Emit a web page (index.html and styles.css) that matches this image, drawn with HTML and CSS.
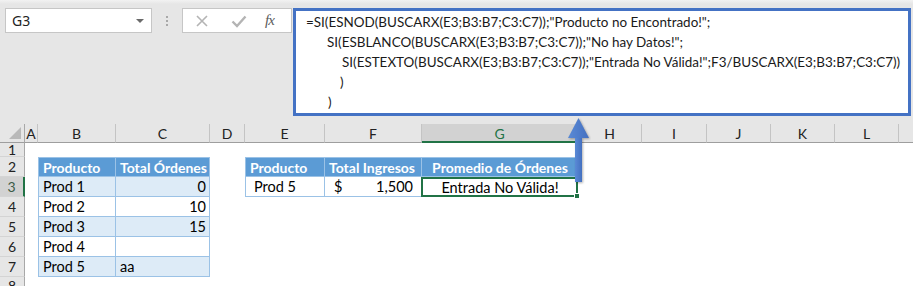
FILE: index.html
```html
<!DOCTYPE html>
<html lang="es">
<head>
<meta charset="utf-8">
<title>Hoja de cálculo</title>
<link rel="stylesheet" href="styles.css">
</head>
<body>
<div class="app">
  <div class="toolbar">
    <div class="namebox">
      <span class="ref">G3</span>
      <span class="caret"></span>
    </div>
    <div class="grip"><i></i><i></i><i></i></div>
    <div class="fxbuttons">
      <svg class="btn" width="14" height="14" viewBox="0 0 14 14"><path d="M2 2 L12 12 M12 2 L2 12" stroke="#b4b4b4" stroke-width="1.6" fill="none"/></svg>
      <svg class="btn" width="16" height="14" viewBox="0 0 16 14"><path d="M1.5 7.5 L6 12 L14.5 2.5" stroke="#b4b4b4" stroke-width="2.4" fill="none"/></svg>
      <span class="fx">fx</span>
    </div>
    <div class="formula">
      <div class="fl l1">=SI(ESNOD(BUSCARX(E3;B3:B7;C3:C7));"Producto no Encontrado!";</div>
      <div class="fl l2">SI(ESBLANCO(BUSCARX(E3;B3:B7;C3:C7));"No hay Datos!";</div>
      <div class="fl l3">SI(ESTEXTO(BUSCARX(E3;B3:B7;C3:C7));"Entrada No Válida!";F3/BUSCARX(E3;B3:B7;C3:C7))</div>
      <div class="fl l4">)</div>
      <div class="fl l5">)</div>
    </div>
  </div>

  <div class="sheet">
    <!-- column headers -->
    <div class="corner"><span class="tri"></span></div>
    <div class="ch">A</div>
    <div class="ch">B</div>
    <div class="ch">C</div>
    <div class="ch">D</div>
    <div class="ch">E</div>
    <div class="ch">F</div>
    <div class="ch sel">G</div>
    <div class="ch">H</div>
    <div class="ch">I</div>
    <div class="ch">J</div>
    <div class="ch">K</div>
    <div class="ch">L</div>
    <div class="ch last"></div>

    <!-- row 1 -->
    <div class="rh r1">1</div>
    <div class="blank span-rest"></div>

    <!-- row 2 -->
    <div class="rh">2</div>
    <div class="blank"></div>
    <div class="tc th first top">Producto</div>
    <div class="tc th top">Total Órdenes</div>
    <div class="blank"></div>
    <div class="tc th first top">Producto</div>
    <div class="tc th top">Total Ingresos</div>
    <div class="tc th top center">Promedio de Órdenes</div>
    <div class="blank span-tail"></div>

    <!-- row 3 -->
    <div class="rh sel">3</div>
    <div class="blank"></div>
    <div class="tc band first">Prod 1</div>
    <div class="tc band num">0</div>
    <div class="blank"></div>
    <div class="tc first indent">Prod 5</div>
    <div class="tc money"><span>$</span><span>1,500</span></div>
    <div class="tc center active">Entrada No Válida!<span class="handle"></span></div>
    <div class="blank span-tail"></div>

    <!-- row 4 -->
    <div class="rh">4</div>
    <div class="blank"></div>
    <div class="tc first">Prod 2</div>
    <div class="tc num">10</div>
    <div class="blank span-right"></div>

    <!-- row 5 -->
    <div class="rh">5</div>
    <div class="blank"></div>
    <div class="tc band first">Prod 3</div>
    <div class="tc band num">15</div>
    <div class="blank span-right"></div>

    <!-- row 6 -->
    <div class="rh">6</div>
    <div class="blank"></div>
    <div class="tc first">Prod 4</div>
    <div class="tc"></div>
    <div class="blank span-right"></div>

    <!-- row 7 -->
    <div class="rh">7</div>
    <div class="blank"></div>
    <div class="tc band first">Prod 5</div>
    <div class="tc band">aa</div>
    <div class="blank span-right"></div>

    <!-- row 8 -->
    <div class="rh">8</div>
    <div class="blank span-rest"></div>
  </div>

  <!-- callout arrow pointing from G3 up to the formula bar -->
  <svg class="arrow" width="26" height="72" viewBox="0 0 26 72">
    <defs>
      <linearGradient id="shaft" x1="0" x2="1" y1="0" y2="0">
        <stop offset="0" stop-color="#5a8ad6"/>
        <stop offset="1" stop-color="#4470c0"/>
      </linearGradient>
    </defs>
    <g class="arrow-shape">
      <rect x="10" y="20" width="7" height="46" fill="url(#shaft)"/>
      <polygon points="13.5,2 3,22 24,22" fill="url(#shaft)"/>
    </g>
  </svg>
</div>
</body>
</html>
```

FILE: styles.css
```css
* { box-sizing: border-box; }

html, body {
  margin: 0;
  padding: 0;
  background: #e6e6e6;
}

.app {
  position: relative;
  width: 913px;
  height: 286px;
  overflow: hidden;
  font-family: Lato, "Open Sans", sans-serif;
}

/* ---------- formula bar ---------- */
.toolbar {
  height: 124px;
  display: flex;
  align-items: flex-start;
  padding-top: 8px;
  background: linear-gradient(#f2f2f2 0, #e6e6e6 4px, #e6e6e6 100%);
}

.namebox {
  margin-left: 5px;
  width: 147px;
  height: 25px;
  background: #fff;
  border: 1px solid #c6c6c6;
  display: flex;
  align-items: center;
  justify-content: space-between;
  padding: 0 7px 0 6px;
}

.ref {
  font-family: "Noto Sans", sans-serif;
  font-size: 14px;
  color: #222;
}

.caret {
  width: 0;
  height: 0;
  border-left: 4px solid transparent;
  border-right: 4px solid transparent;
  border-top: 4px solid #6a6a6a;
}

.grip {
  width: 30px;
  height: 25px;
  display: flex;
  flex-direction: column;
  align-items: center;
  justify-content: center;
  gap: 2px;
}

.grip i {
  display: block;
  width: 2px;
  height: 2px;
  background: #a8a8a8;
}

.fxbuttons {
  width: 110px;
  height: 25px;
  background: #fff;
  border: 1px solid #c6c6c6;
  display: flex;
  align-items: center;
  padding-left: 12px;
  gap: 22px;
}

.fx {
  font-family: "Liberation Serif", serif;
  font-style: italic;
  font-size: 15px;
  color: #5c5c5c;
  letter-spacing: -1px;
  margin-left: -4px;
}

.formula {
  margin-left: 1px;
  width: 618px;
  height: 108px;
  background: #fff;
  border: 3px solid #4472c4;
  padding-top: 1px;
  font-size: 13.45px;
  color: #1a1a1a;
}

.fl {
  height: 20px;
  line-height: 20px;
  white-space: nowrap;
}
.l1 { padding-left: 10px; }
.l2 { padding-left: 31px; }
.l3 { padding-left: 46px; }
.l4 { padding-left: 44px; }
.l5 { padding-left: 32px; }

/* ---------- worksheet grid ---------- */
.sheet {
  height: 162px;
  background: #fff;
  display: grid;
  grid-template-columns: 25px 13px 78px 94px 35px 80px 97px 156px 64px 65px 64px 64px 64px 1fr;
  grid-template-rows: 19px 14px repeat(6, 20px) 1fr;
  font-size: 14.5px;
}

.corner {
  position: relative;
  background: #e6e6e6;
  border-right: 1px solid #a8a8a8;
  border-bottom: 1px solid #9e9e9e;
}

.tri {
  position: absolute;
  right: 3px;
  bottom: 3px;
  width: 0;
  height: 0;
  border-left: 12px solid transparent;
  border-bottom: 12px solid #b9b9b9;
}

.ch {
  background: #e6e6e6;
  border-right: 1px solid #c4c4c4;
  border-bottom: 1px solid #9e9e9e;
  display: flex;
  align-items: center;
  justify-content: center;
  font-size: 14px;
  color: #222;
  padding-top: 1px;
}
.ch.last { border-right: none; }

.ch.sel {
  background: #d2d2d2;
  color: #217346;
  border-bottom: 2px solid #217346;
}

.rh {
  background: #e6e6e6;
  border-right: 1px solid #a8a8a8;
  border-bottom: 1px solid #d4d4d4;
  display: flex;
  align-items: center;
  justify-content: center;
  font-size: 14px;
  color: #222;
  grid-column: 1;
}
.rh.r1 { align-items: flex-start; line-height: 11px; padding-top: 1px; }
.rh.sel {
  background: #d2d2d2;
  color: #3d5c48;
  border-right: 2px solid #217346;
}

.blank { background: #fff; }
.span-rest { grid-column: 2 / -1; }
.span-tail { grid-column: 9 / -1; }
.span-right { grid-column: 5 / -1; }

/* table cells */
.tc {
  position: relative;
  border-right: 1px solid #9bc2e6;
  border-bottom: 1px solid #9bc2e6;
  display: flex;
  align-items: center;
  padding: 0 3px 0 4px;
  white-space: nowrap;
  color: #000;
}
.tc.first { border-left: 1px solid #9bc2e6; }
.tc.top { border-top: 1px solid #9bc2e6; }
.tc.th {
  background: #5b9bd5;
  color: #fff;
  font-weight: 700;
  font-size: 14px;
}
.tc.band { background: #ddebf7; }
.tc.num { justify-content: flex-end; }
.tc.center { justify-content: center; }
.tc.indent { padding-left: 8px; }
.tc.money {
  justify-content: space-between;
  padding-left: 9px;
  padding-right: 8px;
}

.tc.active {
  border: 2px solid #217346;
  margin-left: -1px;
}

.handle {
  position: absolute;
  right: -4px;
  bottom: -4px;
  width: 6px;
  height: 6px;
  background: #217346;
  border: 1px solid #fff;
}

/* ---------- callout arrow ---------- */
.arrow {
  position: absolute;
  left: 565px;
  top: 116px;
}
.arrow-shape {
  filter: drop-shadow(1px 1px 1px rgba(0, 0, 0, 0.3));
}
```
